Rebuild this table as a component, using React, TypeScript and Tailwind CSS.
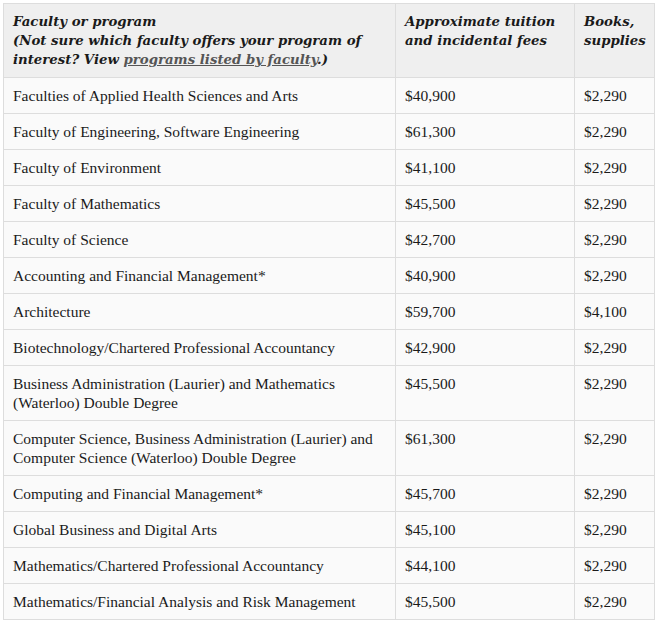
const ROWS: { program: string[]; tuition: string; books: string }[] = [
  { program: ['Faculties of Applied Health Sciences and Arts'], tuition: '$40,900', books: '$2,290' },
  { program: ['Faculty of Engineering, Software Engineering'], tuition: '$61,300', books: '$2,290' },
  { program: ['Faculty of Environment'], tuition: '$41,100', books: '$2,290' },
  { program: ['Faculty of Mathematics'], tuition: '$45,500', books: '$2,290' },
  { program: ['Faculty of Science'], tuition: '$42,700', books: '$2,290' },
  { program: ['Accounting and Financial Management*'], tuition: '$40,900', books: '$2,290' },
  { program: ['Architecture'], tuition: '$59,700', books: '$4,100' },
  { program: ['Biotechnology/Chartered Professional Accountancy'], tuition: '$42,900', books: '$2,290' },
  { program: ['Business Administration (Laurier) and Mathematics', '(Waterloo) Double Degree'], tuition: '$45,500', books: '$2,290' },
  { program: ['Computer Science, Business Administration (Laurier) and', 'Computer Science (Waterloo) Double Degree'], tuition: '$61,300', books: '$2,290' },
  { program: ['Computing and Financial Management*'], tuition: '$45,700', books: '$2,290' },
  { program: ['Global Business and Digital Arts'], tuition: '$45,100', books: '$2,290' },
  { program: ['Mathematics/Chartered Professional Accountancy'], tuition: '$44,100', books: '$2,290' },
  { program: ['Mathematics/Financial Analysis and Risk Management'], tuition: '$45,500', books: '$2,290' },
];

export default function App() {
  return (
    <div className="bg-white min-h-[623px] pt-[3px] pl-[3px] font-['Liberation_Serif',Georgia,serif] text-[15.5px] leading-[19px] text-[#1a1a1a]">
      <table className="table-fixed border-collapse w-[651px]">
        <colgroup>
          <col className="w-[392px]" />
          <col className="w-[179px]" />
          <col className="w-[80px]" />
        </colgroup>
        <thead>
          {/* header cells: bold italic, wider face */}
          <tr className="bg-[#efefef] text-left align-top font-['DejaVu_Serif',Georgia,serif] text-[13.3px]">
            <th className="border border-[#dddddd] px-[9px] py-[8px] italic font-bold">
              Faculty or program
              <br />
              (Not sure which faculty offers your program of
              <br />
              interest? View{' '}
              <a href="#" className="text-[#555555] underline">programs listed by faculty</a>.)
            </th>
            <th className="border border-[#dddddd] px-[9px] py-[8px] italic font-bold">
              Approximate tuition
              <br />
              and incidental fees
            </th>
            <th className="border border-[#dddddd] px-[9px] py-[8px] italic font-bold">
              Books,
              <br />
              supplies
            </th>
          </tr>
        </thead>
        <tbody>
          {ROWS.map((r, i) => (
            <tr key={i} className="bg-[#fafafa] align-top">
              <td className="border border-[#dddddd] px-[9px] py-[8px]">
                {r.program.map((line, j) => (
                  <div key={j}>{line}</div>
                ))}
              </td>
              <td className="border border-[#dddddd] px-[9px] py-[8px]">{r.tuition}</td>
              <td className="border border-[#dddddd] px-[9px] py-[8px]">{r.books}</td>
            </tr>
          ))}
        </tbody>
      </table>
    </div>
  );
}
